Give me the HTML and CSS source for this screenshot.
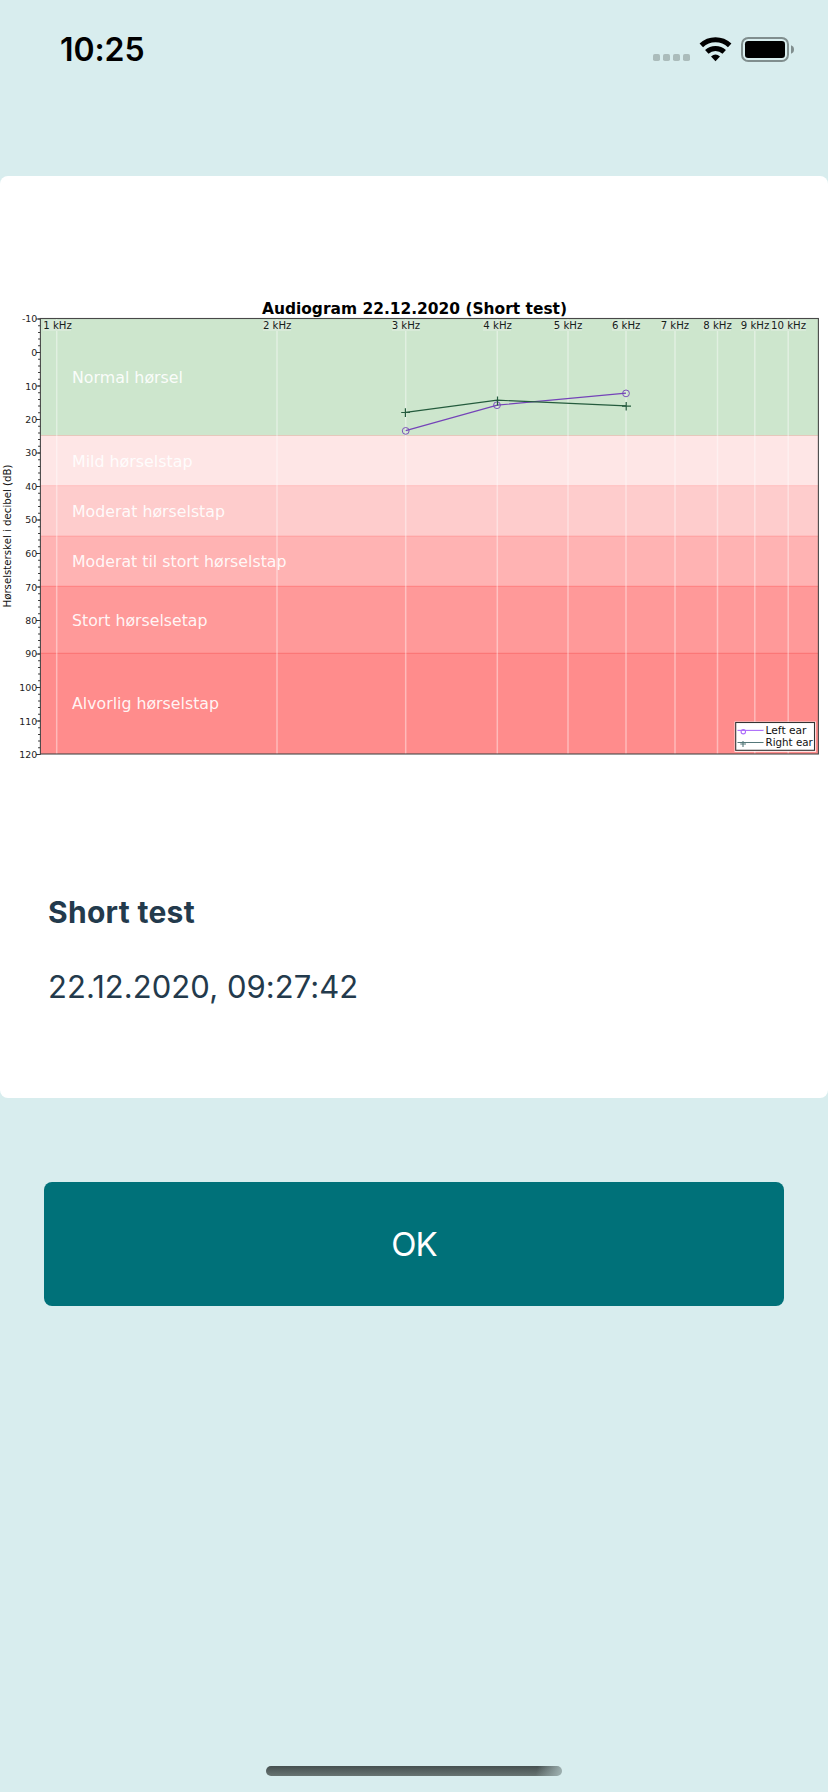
FILE: index.html
```html
<!DOCTYPE html>
<html lang="no">
<head>
<meta charset="utf-8">
<title>Audiogram</title>
<link rel="stylesheet" href="styles.css">
</head>
<body>
<div class="screen">
  <header class="status">
    <span class="time">10:25</span>
    <svg class="status-icons" width="146" height="28" viewBox="650 35 146 28">
      <g fill="#abbcbb"><rect x="653" y="54" width="7" height="7" rx="1.8"/><rect x="663" y="54" width="7" height="7" rx="1.8"/><rect x="673" y="54" width="7" height="7" rx="1.8"/><rect x="683" y="54" width="7" height="7" rx="1.8"/></g>
      <g fill="none" stroke="#000" stroke-width="5">
        <path d="M701.3 45.4A20.5 20.5 0 0 1 729.7 45.4"/>
        <path d="M706.8 51.9A12.6 12.6 0 0 1 724.2 51.9"/>
      </g>
      <path d="M711 56.6Q715.500 52.600 720 56.600L715.500 61.200Z"/>
      <rect x="742" y="38" width="46" height="23" rx="6.2" fill="none" stroke="#808e8e" stroke-width="2"/>
      <rect x="745" y="41" width="40" height="17" rx="3.200"/>
      <path d="M791 45.300Q794 46.300 794 49.500T791 53.700Z" fill="#808e8e"/>
    </svg>
  </header>
  <main class="card">
    <svg class="chart" width="828" height="480" viewBox="0 290 828 480">
      <text class="title" x="262" y="314.300" textLength="305" lengthAdjust="spacingAndGlyphs">Audiogram 22.12.2020 (Short test)</text>
      <g class="bands">
        <rect x="40" y="318.500" width="778.500" height="117" fill="#cde6cd"/>
        <rect x="40" y="435.500" width="778.500" height="50" fill="#fee6e6"/>
        <rect x="40" y="485.500" width="778.500" height="50.500" fill="#fecccc"/>
        <rect x="40" y="536" width="778.500" height="50" fill="#ffb3b3"/>
        <rect x="40" y="586" width="778.500" height="67" fill="#ff9999"/>
        <rect x="40" y="653" width="778.500" height="101" fill="#ff8c8c"/>
      </g>
      <g class="edges">
        <path d="M40 435.500H818" stroke="#e6c8bc"/>
        <path d="M40 485.700H818" stroke="#ffc0c0"/>
        <path d="M40 536.200H818" stroke="#ffa0a0"/>
        <path d="M40 586.300H818" stroke="#ff8080"/>
        <path d="M40 653.300H818" stroke="#fb7272"/>
      </g>
      <path class="grid" d="M56.700 319V754M277 319V754M405.700 319V754M497.300 319V754M568 319V754M626 319V754M675 319V754M717.500 319V754M754.800 319V754M788.200 319V754"/>
      <g class="plates">
        <rect x="43" y="320" width="28" height="11"/><rect x="263" y="320" width="28" height="11"/><rect x="392" y="320" width="28" height="11"/><rect x="483" y="320" width="28" height="11"/><rect x="554" y="320" width="28" height="11"/><rect x="612" y="320" width="28" height="11"/><rect x="661" y="320" width="28" height="11"/><rect x="703" y="320" width="28" height="11"/><rect x="741" y="320" width="28" height="11"/><rect x="771" y="320" width="35" height="11"/>
      </g>
      <g class="khz">
        <text x="57.500" y="329" textLength="28.500" lengthAdjust="spacingAndGlyphs">1 kHz</text>
        <text x="277.200" y="329" textLength="28.500" lengthAdjust="spacingAndGlyphs">2 kHz</text>
        <text x="405.900" y="329" textLength="28.500" lengthAdjust="spacingAndGlyphs">3 kHz</text>
        <text x="497.600" y="329" textLength="28.500" lengthAdjust="spacingAndGlyphs">4 kHz</text>
        <text x="568" y="329" textLength="28.500" lengthAdjust="spacingAndGlyphs">5 kHz</text>
        <text x="626.200" y="329" textLength="28.500" lengthAdjust="spacingAndGlyphs">6 kHz</text>
        <text x="674.900" y="329" textLength="28.500" lengthAdjust="spacingAndGlyphs">7 kHz</text>
        <text x="717.500" y="329" textLength="28.500" lengthAdjust="spacingAndGlyphs">8 kHz</text>
        <text x="755" y="329" textLength="28.500" lengthAdjust="spacingAndGlyphs">9 kHz</text>
        <text x="788.500" y="329" textLength="35" lengthAdjust="spacingAndGlyphs">10 kHz</text>
      </g>
      <g class="zone">
        <text x="72" y="383.300" textLength="111" lengthAdjust="spacingAndGlyphs">Normal hørsel</text>
        <text x="72" y="466.700" textLength="120.500" lengthAdjust="spacingAndGlyphs">Mild hørselstap</text>
        <text x="72" y="517" textLength="153" lengthAdjust="spacingAndGlyphs">Moderat hørselstap</text>
        <text x="72" y="567" textLength="214.500" lengthAdjust="spacingAndGlyphs">Moderat til stort hørselstap</text>
        <text x="72" y="625.700" textLength="135.500" lengthAdjust="spacingAndGlyphs">Stort hørselsetap</text>
        <text x="72" y="709.200" textLength="147" lengthAdjust="spacingAndGlyphs">Alvorlig hørselstap</text>
      </g>
      <path class="minor" d="M39.300 318.500V755"/>
      <path class="major" d="M38.300 318.500V755"/>
      <rect class="frame" x="40.400" y="318.500" width="778" height="435.500"/>
      <g class="db">
        <text x="37.200" y="322.300">-10</text><text x="37.200" y="355.800">0</text><text x="37.200" y="389.500">10</text><text x="37.200" y="423">20</text><text x="37.200" y="456.400">30</text><text x="37.200" y="489.900">40</text><text x="37.200" y="523.400">50</text><text x="37.200" y="556.800">60</text><text x="37.200" y="590.500">70</text><text x="37.200" y="623.700">80</text><text x="37.200" y="657.200">90</text><text x="37.200" y="690.700">100</text><text x="37.200" y="724.500">110</text><text x="37.200" y="757.600">120</text>
      </g>
      <text class="axis" transform="translate(11 607.500) rotate(-90)" textLength="143" lengthAdjust="spacingAndGlyphs">Hørselsterskel i decibel (dB)</text>
      <g class="left">
        <path d="M405.700 430.700L497.300 405.200L626 393.200"/>
        <circle cx="405.700" cy="430.900" r="3.400"/><circle cx="497" cy="405.200" r="3.400"/><circle cx="626" cy="393.400" r="3.400"/>
      </g>
      <g class="right">
        <path d="M405.700 412.300L497.300 400.200L626 405.800"/>
        <path d="M401.200 412.500H410M405.400 408.200V417M493 400.500H502M497.500 396.500V405.500M622 406.200H631M626.200 402V410.500"/>
      </g>
      <rect x="734.500" y="721.500" width="81.500" height="30.500" fill="#fff" opacity=".75"/>
      <rect class="legend" x="735.700" y="722.500" width="78.800" height="27.800"/>
      <g class="key-left"><path d="M737.500 730.400H763.500"/><circle cx="743.300" cy="731.700" r="2.200"/></g>
      <g class="key-right"><path d="M737.500 742.500H763.500M740.300 744H746M743 741V747"/></g>
      <g class="key"><text x="765.500" y="734.200" textLength="41" lengthAdjust="spacingAndGlyphs">Left ear</text><text x="765.500" y="746.400" textLength="47.300" lengthAdjust="spacingAndGlyphs">Right ear</text></g>
    </svg>
    <section class="info">
      <h1 class="name">Short test</h1>
      <p class="date">22.12.2020, 09:27:42</p>
    </section>
  </main>
  <button class="ok">OK</button>
  <div class="home"></div>
</div>
</body>
</html>
```
FILE: styles.css
```css
* { box-sizing: border-box; }
body { margin: 0; background: #d8edee; font-family: Inter, "Liberation Sans", sans-serif; }
.screen { height: 1792px; display: flex; flex-direction: column; }
.status { height: 176px; padding: 30px 32px 0 60px; display: flex; justify-content: space-between; align-items: flex-start; }
.time { font-size: 32px; line-height: 40px; font-weight: 600; letter-spacing: -0.1px; color: #000; }
.status-icons { margin-top: 5px; }
.card { height: 922px; background: #fff; border-radius: 8px; padding-top: 114px; overflow: hidden; }
.chart { display: block; font-family: "DejaVu Sans", sans-serif; }
.title { font-size: 16px; font-weight: 700; fill: #000; }
.edges { stroke-width: 1; }
.grid { stroke: #fff; stroke-opacity: .4; stroke-width: 1.5; }
.plates { fill: #d8ead8; }
.khz { font-size: 11.2px; fill: #16201a; text-anchor: middle; }
.zone { font-size: 16.2px; fill: #fff; fill-opacity: .92; }
.minor, .major { stroke: #333; fill: none; }
.minor { stroke-width: 2.4; stroke-dasharray: 1 5.7; }
.major { stroke-width: 4.4; stroke-dasharray: 1 32.5; }
.frame { fill: none; stroke: #484848; stroke-width: 1.1; }
.db { font-size: 9.4px; fill: #222; text-anchor: end; }
.axis { font-size: 10.8px; fill: #111; }
.left { fill: none; stroke: #7443b8; stroke-width: 1.2; }
.left circle { stroke-width: .9; }
.right { fill: none; stroke: #245b3d; stroke-width: 1.2; }
.legend { fill: #fff; stroke: #333; stroke-width: 1.1; }
.key-left { fill: none; stroke: #ac6cfa; stroke-width: 1.1; }
.key-right { stroke: #55787a; stroke-width: 1.1; }
.key { font-size: 11px; fill: #111; }
.info { padding: 122px 48px 0; color: #233a4c; }
.name { margin: 0; font-size: 30px; line-height: 40px; font-weight: 700; letter-spacing: 0.3px; }
.date { margin: 35px 0 0; font-size: 31px; line-height: 40px; letter-spacing: 0.05px; }
.ok { margin: 84px 44px 0; height: 124px; border: 0; border-radius: 8px; padding: 0; background: #007179; color: #fff; font: 400 33px/40px Inter, sans-serif; letter-spacing: -1px; }
.home { margin: auto auto 16px; width: 296px; height: 10px; border-radius: 5px; background: linear-gradient(105deg, transparent 91%, #9aacac 99%), linear-gradient(#465050, #687472); }
```
